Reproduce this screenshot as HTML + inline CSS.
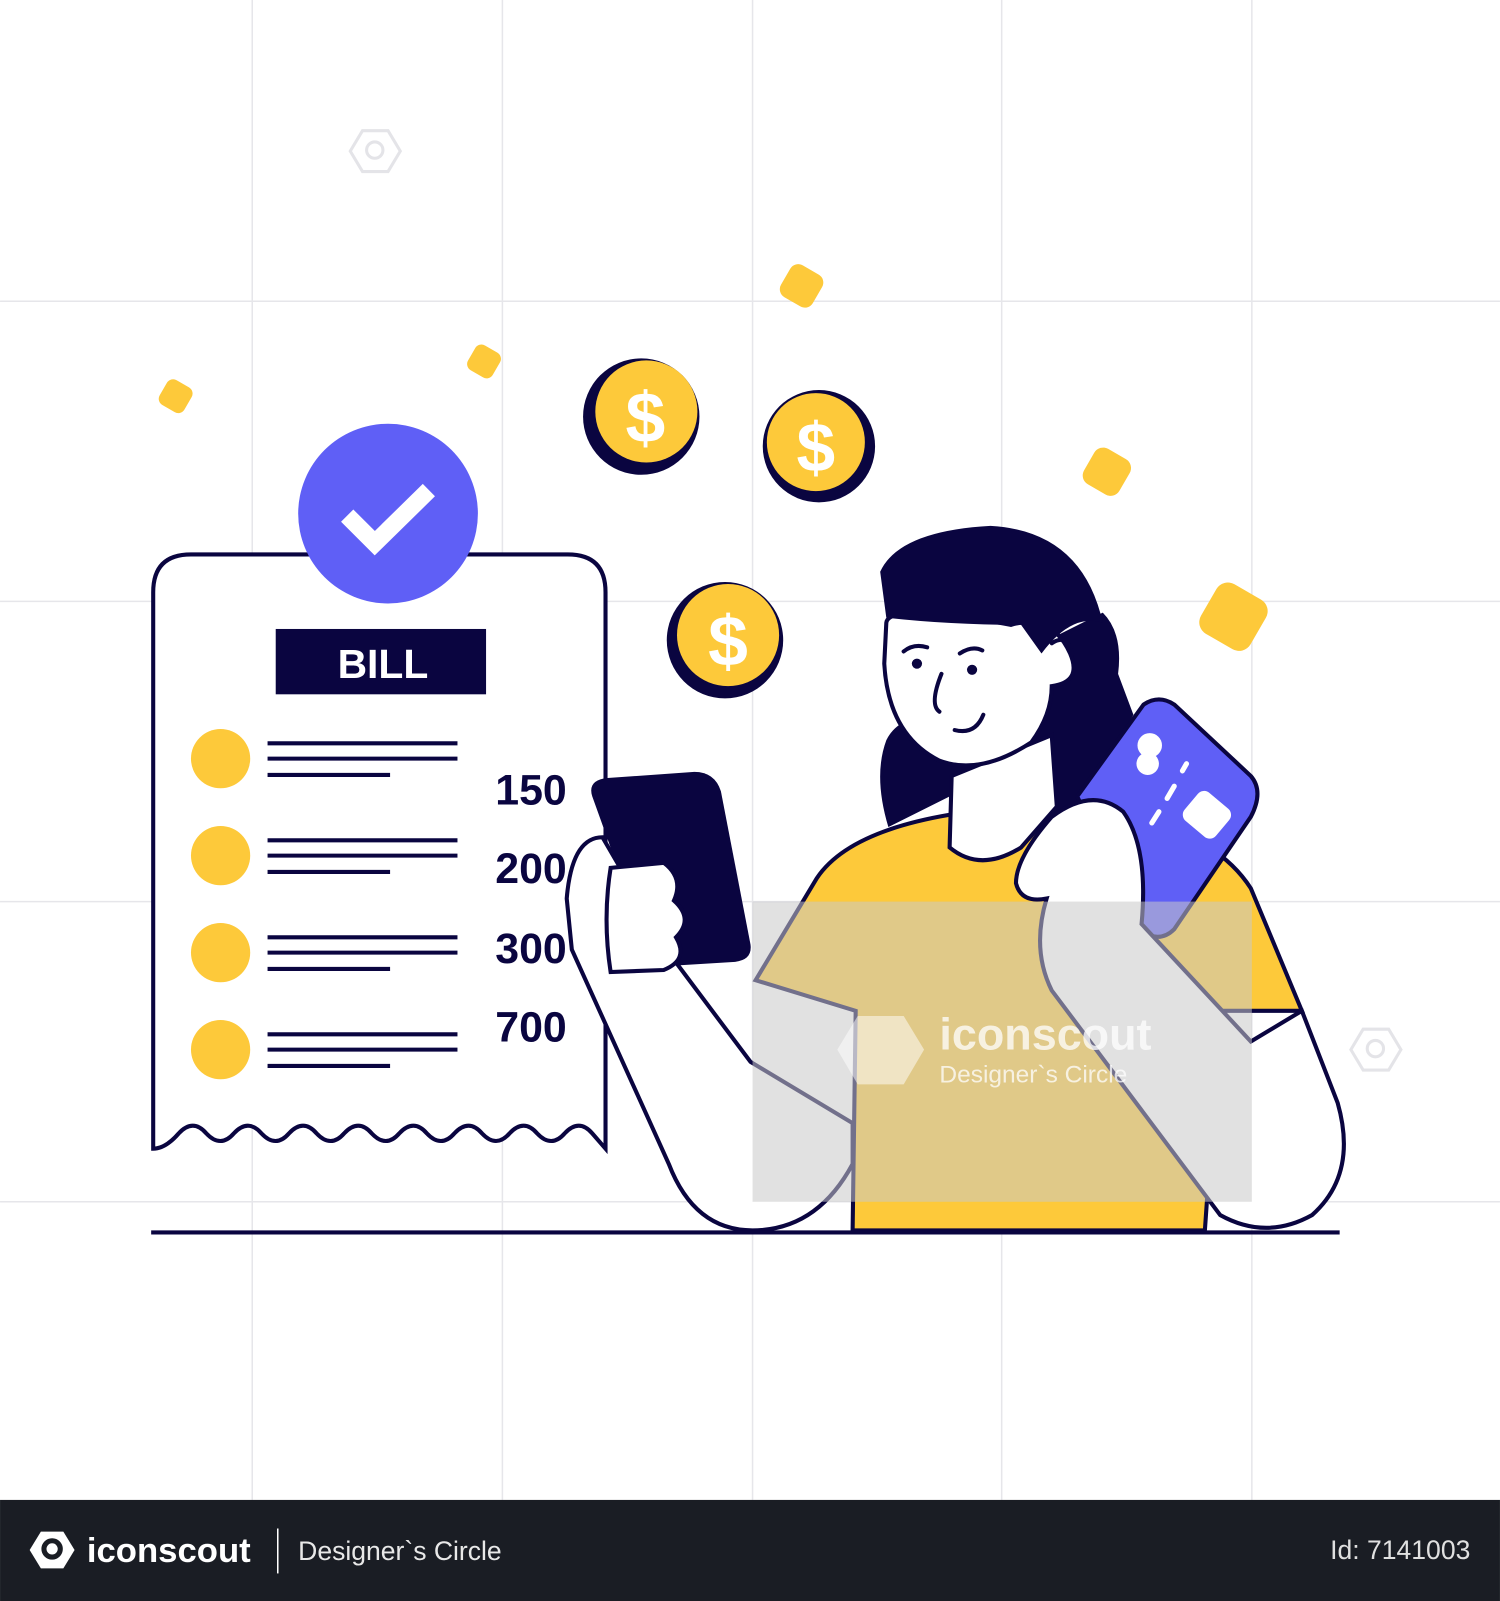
<!DOCTYPE html>
<html><head><meta charset="utf-8"><style>
html,body{margin:0;padding:0;background:#fff;width:1500px;height:1601px;overflow:hidden}
svg{display:block}
</style></head><body>
<svg width="1500" height="1601" viewBox="0 0 1469 1568" xmlns="http://www.w3.org/2000/svg">
<rect width="1469" height="1568" fill="#fff"/>
<g stroke="#e6e6ea" stroke-width="1.5">
<line x1="247" y1="0" x2="247" y2="1469"/><line x1="492" y1="0" x2="492" y2="1469"/><line x1="737" y1="0" x2="737" y2="1469"/><line x1="981" y1="0" x2="981" y2="1469"/><line x1="1226" y1="0" x2="1226" y2="1469"/>
<line x1="0" y1="295" x2="1469" y2="295"/><line x1="0" y1="589" x2="1469" y2="589"/><line x1="0" y1="883" x2="1469" y2="883"/><line x1="0" y1="1177" x2="1469" y2="1177"/>
</g>
<g fill="none" stroke="#e4e4e8" stroke-width="3">
<path d="M355 128 H380 L392 148 L380 168 H355 L343 148Z"/><circle cx="367" cy="147" r="8"/>
<path d="M1335 1008 H1360 L1372 1028 L1360 1048 H1335 L1323 1028Z"/><circle cx="1347" cy="1027" r="8"/>
</g>
<g fill="#fdc93a">
<rect x="158" y="374" width="28" height="28" rx="7" transform="rotate(30 172 388)"/>
<rect x="460" y="340" width="28" height="28" rx="7" transform="rotate(30 474 354)"/>
<rect x="767" y="262" width="36" height="36" rx="9" transform="rotate(30 785 280)"/>
<rect x="1064" y="442" width="40" height="40" rx="10" transform="rotate(30 1084 462)"/>
<rect x="1180" y="576" width="56" height="56" rx="13" transform="rotate(30 1208 604)"/>
</g>
<g>
<circle cx="628" cy="408" r="57" fill="#0a0540"/><circle cx="633" cy="403" r="50" fill="#fdc93a"/>
<text x="632" y="433" font-family="Liberation Sans,sans-serif" font-weight="bold" font-size="70" fill="#fff" text-anchor="middle">$</text>
<circle cx="802" cy="437" r="55" fill="#0a0540"/><circle cx="799" cy="433" r="48" fill="#fdc93a"/>
<text x="799" y="462" font-family="Liberation Sans,sans-serif" font-weight="bold" font-size="68" fill="#fff" text-anchor="middle">$</text>
<circle cx="710" cy="627" r="57" fill="#0a0540"/><circle cx="713" cy="622" r="50" fill="#fdc93a"/>
<text x="713" y="652" font-family="Liberation Sans,sans-serif" font-weight="bold" font-size="70" fill="#fff" text-anchor="middle">$</text>
</g>
<path d="M150 1125 V580 Q150 543 187 543 H556 Q593 543 593 580 V1125 L580 1110 Q567 1095 553 1110 Q540 1125 526 1110 Q513 1095 499 1110 Q486 1125 472 1110 Q459 1095 445 1110 Q432 1125 418 1110 Q405 1095 391 1110 Q378 1125 364 1110 Q351 1095 337 1110 Q324 1125 310 1110 Q297 1095 283 1110 Q270 1125 256 1110 Q243 1095 229 1110 Q216 1125 202 1110 Q189 1095 175 1110 Q162 1125 150 1125Z" fill="#fff" stroke="#0a0540" stroke-width="4"/>
<circle cx="380" cy="503" r="88" fill="#5f5ff6"/>
<path d="M340 505 L367 532 L420 480" fill="none" stroke="#fff" stroke-width="17"/>
<rect x="270" y="616" width="206" height="64" fill="#0a0540"/>
<text x="375" y="664" font-family="Liberation Sans,sans-serif" font-weight="bold" font-size="40" fill="#fff" text-anchor="middle">BILL</text>
<g fill="#fdc93a"><circle cx="216" cy="743" r="29"/><circle cx="216" cy="838" r="29"/><circle cx="216" cy="933" r="29"/><circle cx="216" cy="1028" r="29"/></g>
<g stroke="#0a0540" stroke-width="4">
<line x1="262" y1="728" x2="448" y2="728"/><line x1="262" y1="743" x2="448" y2="743"/><line x1="262" y1="759" x2="382" y2="759"/>
<line x1="262" y1="823" x2="448" y2="823"/><line x1="262" y1="838" x2="448" y2="838"/><line x1="262" y1="854" x2="382" y2="854"/>
<line x1="262" y1="918" x2="448" y2="918"/><line x1="262" y1="933" x2="448" y2="933"/><line x1="262" y1="949" x2="382" y2="949"/>
<line x1="262" y1="1013" x2="448" y2="1013"/><line x1="262" y1="1028" x2="448" y2="1028"/><line x1="262" y1="1044" x2="382" y2="1044"/>
</g>
<g font-family="Liberation Sans,sans-serif" font-weight="bold" font-size="42" fill="#0a0540">
<text x="485" y="788">150</text><text x="485" y="865">200</text><text x="485" y="943">300</text><text x="485" y="1020">700</text>
</g>
<!-- hair back -->
<path d="M870 810 Q855 760 868 725 Q880 700 920 700 L1000 640 L1080 600 Q1100 620 1095 660 L1110 700 L1060 790 L1030 800 L1030 730 Z" fill="#0a0540"/>
<path d="M800 860 Q830 815 930 798 L1045 795 Q1180 800 1225 870 L1275 990 L1195 990 L1180 1205 L835 1205 L838 990 L740 960 Z" fill="#fdc93a" stroke="#0a0540" stroke-width="4"/>
<path d="M932 760 L930 830 Q960 855 1000 830 L1035 790 L1030 720 Z" fill="#fff" stroke="#0a0540" stroke-width="4"/>
<path d="M868 610 Q870 590 990 612 Q1030 600 1048 640 Q1060 668 1030 672 Q1030 700 1010 727 Q960 760 920 745 Q870 720 866 650 Z" fill="#fff" stroke="#0a0540" stroke-width="4"/>
<path d="M862 560 Q880 520 970 515 Q1060 520 1080 610 Q1050 600 1020 640 L1000 612 Q930 612 868 605 Z" fill="#0a0540"/>
<g stroke="#0a0540" stroke-width="4" fill="none" stroke-linecap="round">
<path d="M885 638 Q895 630 908 634"/><path d="M940 640 Q952 632 962 637"/>
<path d="M922 660 Q910 690 920 697"/><path d="M935 715 Q955 720 963 700"/>
<path d="M1030 630 Q1045 620 1050 640"/>
</g>
<circle cx="898" cy="650" r="5" fill="#0a0540"/><circle cx="952" cy="656" r="5" fill="#0a0540"/>
<path d="M555 880 Q560 820 590 820 L660 940 L735 1040 L835 1100 L835 1140 Q800 1205 737 1205 Q680 1205 655 1140 L560 930 Z" fill="#fff" stroke="#0a0540" stroke-width="4"/>
<path d="M580 780 Q575 764 595 762 L680 756 Q700 756 706 775 L735 925 Q737 940 720 942 L640 947 Z" fill="#0a0540"/>
<path d="M598 850 L650 845 Q670 860 660 882 Q680 900 662 918 Q675 940 650 950 L598 952 Q590 900 598 850Z" fill="#fff" stroke="#0a0540" stroke-width="4"/>
<path d="M1055 780 L1120 690 Q1135 680 1150 690 L1225 760 Q1238 775 1225 800 L1150 910 Q1135 925 1115 910 Z" fill="#5f5ff6" stroke="#0a0540" stroke-width="4"/>
<circle cx="1126" cy="730" r="12" fill="#fff"/><circle cx="1124" cy="748" r="11" fill="#fff"/>
<g stroke="#fff" stroke-width="5" stroke-linecap="round"><line x1="1162" y1="748" x2="1158" y2="755"/><line x1="1150" y1="770" x2="1143" y2="782"/><line x1="1135" y1="795" x2="1128" y2="806"/></g>
<rect x="1162" y="780" width="40" height="36" rx="8" fill="#fff" transform="rotate(40 1182 798)"/>
<path d="M1030 800 Q1070 770 1100 795 Q1125 830 1118 905 L1225 1020 L1275 990 L1310 1080 Q1330 1150 1285 1190 Q1240 1215 1195 1190 L1030 970 Q1010 930 1025 880 Q1000 885 995 865 Q995 840 1030 800 Z" fill="#fff" stroke="#0a0540" stroke-width="4"/>
<rect x="737" y="883" width="489" height="294" fill="#c8c8c8" opacity="0.55"/>
<text x="920" y="1028" font-family="Liberation Sans,sans-serif" font-weight="bold" font-size="44" fill="#fff" opacity="0.75">iconscout</text>
<text x="920" y="1060" font-family="Liberation Sans,sans-serif" font-size="24" fill="#fff" opacity="0.75">Designer`s Circle</text>
<path d="M840 995 H885 L905 1028 L885 1062 H840 L820 1028Z" fill="#fff" opacity="0.5"/>
<line x1="148" y1="1207" x2="1312" y2="1207" stroke="#0a0540" stroke-width="4"/>
<rect x="0" y="1469" width="1469" height="99" fill="#1a1d24"/>
<path d="M40 1500 H62 L73 1518 L62 1536 H40 L29 1518Z" fill="#fff"/>
<circle cx="51" cy="1517" r="8" fill="none" stroke="#1a1d24" stroke-width="5"/>
<text x="85" y="1530" font-family="Liberation Sans,sans-serif" font-weight="bold" font-size="34" fill="#fff">iconscout</text>
<line x1="272" y1="1497" x2="272" y2="1541" stroke="#fff" stroke-width="1.5"/>
<text x="292" y="1528" font-family="Liberation Sans,sans-serif" font-size="26" fill="#e8e8e8">Designer`s Circle</text>
<text x="1440" y="1527" font-family="Liberation Sans,sans-serif" font-size="26" fill="#e0e0e0" text-anchor="end">Id: 7141003</text>
</svg>
</body></html>
